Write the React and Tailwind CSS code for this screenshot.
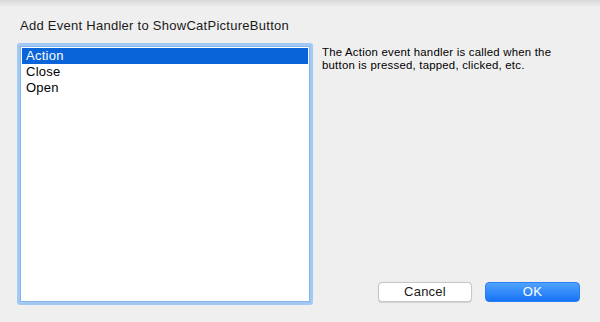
import React, { useState } from "react";

const EVENTS = ["Action", "Close", "Open"];

export default function App() {
  const [selected, setSelected] = useState(0);

  return (
    <div
      className="relative w-[600px] h-[322px] overflow-hidden bg-[#efefef] text-[#1a1a1a]"
      style={{ fontFamily: '"Liberation Sans", Arial, sans-serif' }}
    >
      {/* window shadow along the top edge */}
      <div className="absolute inset-x-0 top-0 h-[7px] bg-gradient-to-b from-[#d9d9d9] to-[#efefef]" />

      <div className="relative pt-[18px] pl-[20px] text-[13px] leading-[16px] tracking-[0.27px]">
        Add Event Handler to ShowCatPictureButton
      </div>

      <div className="relative mt-[9px] flex pl-[17px]">
        {/* List with focus ring */}
        <div className="w-[296px] h-[262px] rounded-[3px] bg-[#a2c8f4] p-[3px]">
          <div className="h-full border border-[#86b4ee] bg-white p-[1px]">
            {EVENTS.map((name, i) => (
              <div
                key={name}
                onClick={() => setSelected(i)}
                className={`h-[16px] px-[4px] text-[13px] leading-[16px] tracking-[0.25px] ${
                  i === selected ? "bg-[#0864d8] text-white" : "text-black"
                }`}
              >
                {name}
              </div>
            ))}
          </div>
        </div>

        {/* Description + buttons */}
        <div className="flex flex-1 flex-col pl-[9px]">
          <p className="mt-[3px] w-[250px] text-[11.4px] leading-[13px] tracking-[0.22px] text-black">
            The Action event handler is called when the button is pressed, tapped, clicked, etc.
          </p>
          <div className="mt-auto mb-[3px] flex justify-end gap-[13px] pr-[20px]">
            <button className="h-[20px] w-[94px] rounded-[4px] border border-[#c6c6c6] bg-white text-[13px] leading-[18px] tracking-[0.25px] text-[#1a1a1a] shadow-[0_0.5px_1px_rgba(0,0,0,0.12)]">
              Cancel
            </button>
            <button className="h-[20px] w-[95px] rounded-[4px] border border-[#2a7ef3] bg-gradient-to-b from-[#4fa2fc] to-[#1373f6] text-[13px] leading-[18px] tracking-[0.25px] text-white">
              OK
            </button>
          </div>
        </div>
      </div>
    </div>
  );
}
